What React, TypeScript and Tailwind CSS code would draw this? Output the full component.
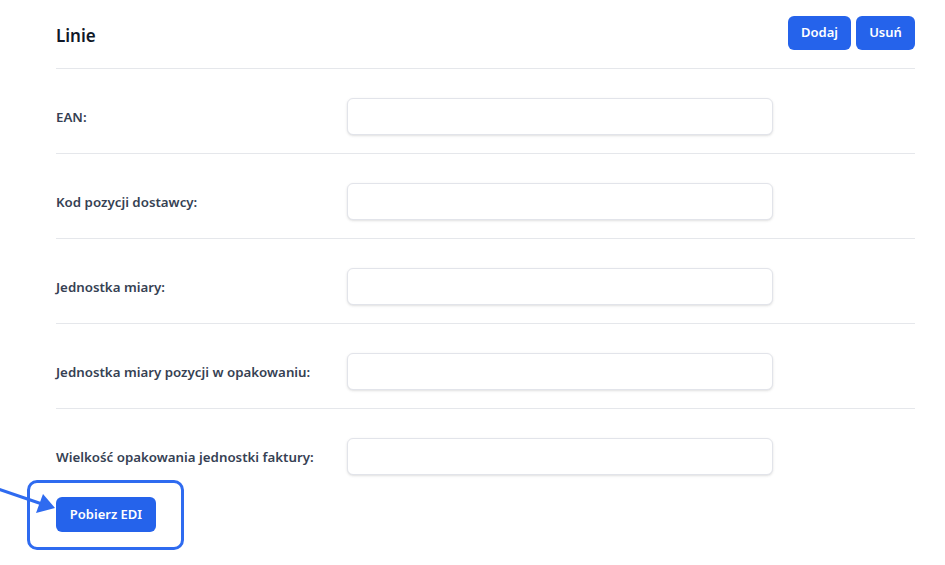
import React from "react";

// ─── LINIE (EDI) ──────────────────────────────────────────────────────────────

const fields = [
  "EAN:",
  "Kod pozycji dostawcy:",
  "Jednostka miary:",
  "Jednostka miary pozycji w opakowaniu:",
  "Wielkość opakowania jednostki faktury:",
];

export default function App() {
  return (
    <div
      className="relative w-[945px] h-[565px] bg-white overflow-hidden"
      style={{ fontFamily: '"Noto Sans", "Open Sans", sans-serif' }}
    >
      <div className="pl-[56px] pr-[30px]">
        {/* Header */}
        <div className="flex items-center justify-between pt-4 pb-[18px] border-b border-[#e5e7eb]">
          <h2 className="pt-[5px] text-[17px] font-semibold text-gray-900">Linie</h2>
          <div className="flex gap-[5px]">
            <button className="h-[34px] w-[63px] rounded-md bg-[#2563eb] text-white text-[13px] font-semibold">
              Dodaj
            </button>
            <button className="h-[34px] w-[59px] rounded-md bg-[#2563eb] text-white text-[13px] font-semibold">
              Usuń
            </button>
          </div>
        </div>

        {/* Rows */}
        {fields.map((label, i) => (
          <div
            key={label}
            className={
              "flex items-center pt-[29px] pb-[18px] " +
              (i < fields.length - 1 ? "border-b border-[#e5e7eb]" : "")
            }
          >
            <label className="w-[291px] shrink-0 pt-[2px] text-[13.3px] font-semibold text-gray-700">{label}</label>
            <input
              type="text"
              className="w-[426px] h-[37px] rounded-md border border-[#e2e4ea] bg-white shadow-sm focus:outline-none"
            />
          </div>
        ))}

        <div className="mt-1">
          <button className="h-[35px] w-[100px] rounded-md bg-[#2563eb] text-white text-[13px] font-semibold">
            Pobierz EDI
          </button>
        </div>
      </div>

      {/* Annotation */}
      <div className="absolute left-[27px] top-[480px] w-[157px] h-[70px] rounded-[10px] border-[3px] border-[#2f6bf0]" />
      <svg className="absolute left-0 top-[480px]" width="60" height="40" viewBox="0 480 60 40">
        <line x1="-2" y1="489" x2="42" y2="504" stroke="#2f6bf0" strokeWidth="3" />
        <polygon points="55,508 36,513 43,494" fill="#2f6bf0" />
      </svg>
    </div>
  );
}
